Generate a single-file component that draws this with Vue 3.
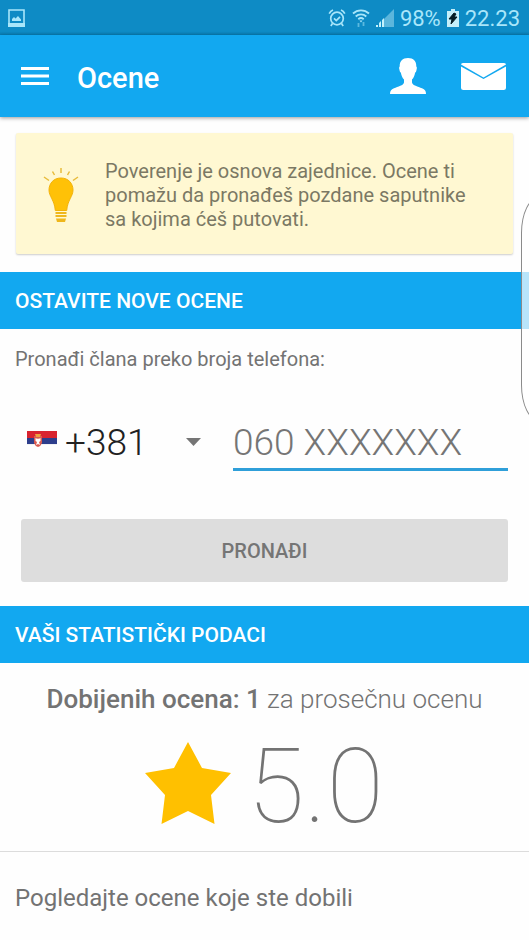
<script setup>
import { ref } from 'vue'

const prefix = ref('+381')
const phone = ref('')
</script>

<template>
  <div class="screen">
    <div class="status">
      <svg class="shot" width="17" height="18" viewBox="0 0 17 18" aria-hidden="true">
        <path d="M1 1h15v14H1z" fill="none" stroke="#a9e6fa" stroke-width="1.6" />
        <path d="M0 14h17v4H0z" fill="#a9e6fa" />
        <path d="M4 12V10l2-2 1.500 1.500L10 7l3 3.500V12z" fill="#a9e6fa" />
      </svg>
      <div class="indicators">
        <svg width="18" height="18" viewBox="0 0 18 18" fill="none" stroke="#a9e6fa" stroke-width="1.700" aria-hidden="true">
          <circle cx="9" cy="9.500" r="6.300" />
          <path d="M1.200 4.600C2 3 3.300 1.700 5 1M16.800 4.600C16 3 14.700 1.700 13 1M6 9.300l2.300 2.300L12 7.800M4.500 14.500L2.800 17M13.500 14.500l1.700 2.500" />
        </svg>
        <svg width="18" height="18" viewBox="0 0 18 18" fill="none" stroke="#a9e6fa" stroke-width="1.800" aria-hidden="true">
          <path d="M1 4.500C5.500.200 12.500.200 17 4.500M3.700 7.500c3-2.800 7.600-2.800 10.600 0M6.300 10.200c1.600-1.400 3.800-1.400 5.400 0" />
          <path d="M7.500 11.500h3L9 13.500z" fill="#a9e6fa" stroke="none" />
          <path d="M6.500 18v-4M11.500 13v4" stroke="#5cb9df" />
        </svg>
        <svg width="18" height="18" viewBox="0 0 18 18" aria-hidden="true">
          <path d="M7 11L18 0v18H7z" fill="#5cb6dc" />
          <path d="M0 16h2v2H0zM3 14l2-2v6H3z" fill="#c4f1fc" />
          <path d="M6 11l2-2v9H6z" fill="#c4f1fc" />
        </svg>
        <span>98%</span>
        <svg width="12" height="18" viewBox="0 0 12 18" aria-hidden="true">
          <path d="M4 0h4v2h4v16H0V2h4z" fill="#c4eef9" />
          <path d="M7 4L2 10h3l-1 5 6-7H7l2-3z" fill="#061c24" stroke="#061c24" />
        </svg>
        <span>22.23</span>
      </div>
    </div>

    <header class="appbar">
      <button class="icon-button menu" type="button" aria-label="Meni">
        <svg width="28" height="20" viewBox="0 0 28 20" aria-hidden="true">
          <path d="M0 2.500h28M0 10h28M0 17.500h28" stroke="#fff" stroke-width="3" />
        </svg>
      </button>
      <h1>Ocene</h1>
      <button class="icon-button profile" type="button" aria-label="Profil">
        <svg width="36" height="36" viewBox="0 0 36 36" aria-hidden="true">
          <path d="M18 0C12.500 0 9.600 3 9.700 8.500C9 9 9 10 9.400 11.500C9.700 13.300 10.200 14.400 10.900 14.700C11.400 17.600 12.300 19.800 14 21.500V24.500C13.500 27.500 8 28.500 4 30.300C1 31.600 0 33 0 36H36C36 33 35 31.600 32 30.300C28 28.500 22.500 27.500 22 24.500V21.500C23.700 19.800 24.600 17.600 25.100 14.700C25.800 14.400 26.300 13.300 26.600 11.500C27 10 27 9 26.300 8.500C26.400 3 23.500 0 18 0Z" fill="#fff" />
        </svg>
      </button>
      <button class="icon-button" type="button" aria-label="Poruke">
        <svg width="45" height="27" viewBox="0 0 45 27" aria-hidden="true">
          <path d="M2 0h41q2 0 2 1.500L22.500 14.500L0 1.500Q0 0 2 0z" fill="#fff" />
          <path d="M0 3.500l22.500 12.500L45 3.500v21q0 2.500-2.500 2.500h-40Q0 27 0 24.500z" fill="#fff" />
        </svg>
      </button>
    </header>

    <main>
      <aside class="note">
        <svg width="36" height="56" viewBox="0 0 36 56" aria-hidden="true">
          <path d="M18 1v5M9.500 4.500l2 3.500M26.500 4.500l-2 3.500M1 10l5 3.500M35 10l-5 3.500" fill="none" stroke="#e8bc3c" stroke-width="1.500" />
          <path d="M18 11C10.500 11 6 16.500 6 23C6 29.500 11.500 33 12.300 43.500H23.700C24.500 33 30 29.500 30 23C30 16.500 25.500 11 18 11Z" fill="#ffc107" stroke="#f2b20a" />
          <path d="M12.500 46h11M12.500 49h11" stroke="#efb71c" stroke-width="2" />
          <path d="M13 51.500h10l-1 3.500h-8z" fill="#efb71c" />
        </svg>
        <p>Poverenje je osnova zajednice. Ocene ti pomažu da pronađeš pozdane saputnike sa kojima ćeš putovati.</p>
      </aside>

      <h2>OSTAVITE NOVE OCENE</h2>
      <form class="search" @submit.prevent>
        <label class="prompt" for="phone">Pronađi člana preko broja telefona:</label>
        <div class="fields">
          <div class="country">
            <svg width="30" height="22" viewBox="0 0 30 22" aria-hidden="true">
              <path d="M0 0h30v7H0z" fill="#d8232f" />
              <path d="M0 7h30v6H0z" fill="#2d3e8c" />
              <path d="M0 13h30v1H0z" fill="#f1f1f4" />
              <path d="M7 5h8v7q-1 3-4 4q-3-1-4-4z" fill="#d95a50" />
              <path d="M8 3h6l-1 3H9z" fill="#eda03f" />
              <path d="M8.500 7l2 1 .500-1 .500 1 2-1v3l-1.500 1 1 3-2-1-2 1 1-3-1.500-1z" fill="#fff" />
            </svg>
            <select v-model="prefix" aria-label="Pozivni broj">
              <option>+381</option>
            </select>
            <svg width="15" height="8" viewBox="0 0 15 8" aria-hidden="true">
              <path d="M0 0h15L7.500 8z" fill="#757575" />
            </svg>
          </div>
          <input id="phone" v-model="phone" type="tel" placeholder="060 XXXXXXX" />
        </div>
        <button class="find" type="submit">PRONAĐI</button>
      </form>

      <h2>VAŠI STATISTIČKI PODACI</h2>
      <section class="stats">
        <p class="summary"><strong>Dobijenih ocena: 1</strong> za prosečnu ocenu</p>
        <div class="score">
          <svg width="86" height="90" viewBox="0 0 86 90" aria-hidden="true">
            <path d="M43 0L57 26L86 31L66 53L69.500 82L43 69L16.500 82L20 53L0 31L29 26Z" fill="#ffc000" />
          </svg>
          <span>5.0</span>
        </div>
      </section>
      <a class="received" href="#ocene">Pogledajte ocene koje ste dobili</a>
    </main>
    <div class="edge-handle"></div>
  </div>
</template>

<style>
body {
  margin: 0;
  background: #fff;
}
</style>

<style scoped>
.screen {
  position: relative;
  overflow: hidden;
  min-height: 100vh;
  background: #fefefe;
  color: #737373;
  font-family: Roboto, "Noto Sans", sans-serif;
}
.screen * {
  box-sizing: border-box;
}
h1, h2, p {
  margin: 0;
}
svg {
  display: block;
  flex: none;
}
button, input, select {
  border: 0;
  border-radius: 0;
  padding: 0;
  background: none;
  font-family: inherit;
  outline: 0;
}
.status {
  display: flex;
  align-items: center;
  justify-content: space-between;
  height: 35px;
  padding: 0 9px 0 8px;
  background: linear-gradient(#0e8bc5 90%, #087db4);
  color: #a9e6fa;
  font-size: 22px;
}
.indicators {
  display: flex;
  align-items: center;
  gap: 6px;
}
.indicators span {
  padding-top: 2px;
  line-height: 34px;
}
.appbar {
  display: flex;
  align-items: center;
  height: 82px;
  padding: 0 23px 0 21px;
  background: #12a8f0;
  box-shadow: 0 1px 4px rgba(0, 0, 0, 0.4);
  color: #fff;
}
.appbar h1 {
  flex: 1;
  padding-top: 3px;
  font-size: 29px;
  font-weight: 500;
}
.menu {
  margin-right: 28px;
}
.profile {
  margin-right: 35px;
}
.note {
  display: flex;
  align-items: center;
  gap: 26px;
  min-height: 121px;
  margin: 16px 16px 18px;
  padding: 2px 27px 0;
  border-radius: 2px;
  background: #fff8d2;
  box-shadow: 0 1px 2px rgba(0, 0, 0, 0.2);
  color: #7b7864;
  font-size: 20px;
  line-height: 24px;
}
h2 {
  padding: 2px 15px 0;
  background: #12a8f0;
  color: #fff;
  font-size: 21px;
  font-weight: 500;
  line-height: 55px;
}
.search {
  padding: 18px 21px 24px;
}
.prompt {
  display: block;
  margin-left: -6px;
  font-size: 20px;
  line-height: 24px;
}
.fields {
  display: flex;
  gap: 32px;
  margin: 42px 0 48px;
}
.country {
  display: flex;
  flex: none;
  align-items: center;
  gap: 8px;
  width: 180px;
  padding-left: 6px;
}
.country select {
  flex: 1;
  min-width: 0;
  appearance: none;
  color: #212121;
  font-size: 37px;
  font-weight: 300;
}
.fields input {
  flex: 1;
  min-width: 0;
  height: 58px;
  padding-top: 3px;
  border-bottom: 3px solid #2f9fd9;
  color: #212121;
  font-size: 37px;
  font-weight: 300;
}
.fields input::placeholder {
  color: #757575;
  opacity: 1;
}
.find {
  display: block;
  width: 100%;
  height: 63px;
  border-radius: 3px;
  background: #ddd;
  color: #757575;
  font-size: 20px;
  font-weight: 500;
}
.stats {
  padding: 20px 0 14px;
  border-bottom: 1px solid #dcdcdc;
}
.summary {
  font-size: 26px;
  font-weight: 300;
  line-height: 32px;
  text-align: center;
}
.summary strong {
  font-weight: 500;
}
.score {
  display: flex;
  align-items: center;
  justify-content: center;
  gap: 16px;
  padding-top: 22px;
}
.score span {
  font-size: 104px;
  font-weight: 100;
  line-height: 100px;
}
.received {
  display: block;
  padding: 30px 15px;
  color: #737373;
  font-size: 24px;
  line-height: 32px;
  text-decoration: none;
}
.edge-handle {
  position: absolute;
  top: 197px;
  right: -32px;
  width: 40px;
  height: 224px;
  border: 1px solid #8b8b8b;
  border-radius: 18px / 36px;
  background: rgba(255, 255, 255, 0.7);
}
</style>
